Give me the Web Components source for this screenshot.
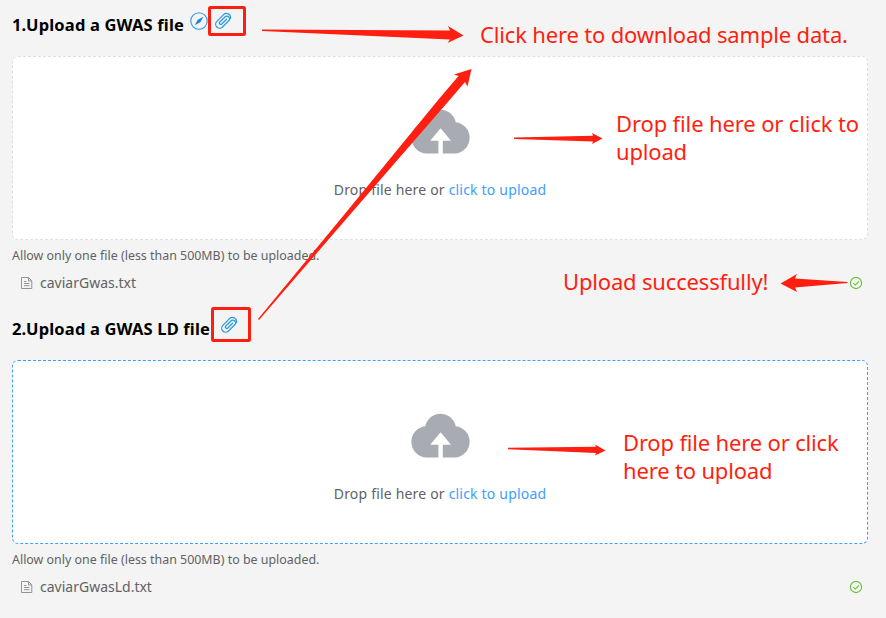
<!DOCTYPE html>
<html lang="en">
<head>
<meta charset="utf-8">
<title>Upload files</title>
<style>
html, body { margin: 0; height: 618px; overflow: hidden; background: #f4f4f4; }
body { font-family: "Noto Sans", "Open Sans", sans-serif; }
</style>
</head>
<body>
<upload-page></upload-page>
<script>
const define = (name, html) => customElements.define(name, class extends HTMLElement {
  constructor() {
    super();
    const t = document.createElement('template');
    t.innerHTML = html;
    this.attachShadow({ mode: 'open' }).append(t.content.cloneNode(true));
  }
});

define('clip-icon', `
<style>:host{display:block;width:18px;height:18px}svg{display:block}</style>
<svg width="18" height="18" viewBox="-9 -9 18 18" fill="none" stroke="#2a9be0" stroke-width="1.25" stroke-linecap="round">
<path transform="rotate(45)" d="M1.3 -3.8V3A1.4 1.4 0 0 1 -1.5 3V-4.2A2.7 2.7 0 0 1 3.9 -4.2V4.6A4 4 0 0 1 -4.1 4.6V-4.9A4.1 4.1 0 0 1 3.4 -7.2"/></svg>`);

define('compass-icon', `
<style>:host{display:block;width:18px;height:18px}svg{display:block}</style>
<svg width="18" height="18" viewBox="0 0 18 18"><circle cx="9" cy="9" r="8.2" fill="none" stroke="#2a9be0" stroke-width="1.1"/>
<path d="M13.3 4.7L10.3 10.2L4.7 13.3L7.8 7.8Z" fill="#1689d6"/></svg>`);

define('cloud-icon', `
<style>:host{display:block;width:59px;height:45px}svg{display:block}</style>
<svg width="59" height="45" viewBox="0 0 59 45"><path fill="#a8abb2" d="M14.3 13.3A15.5 15.5 0 0 1 44.7 13.3A15.6 15.6 0 0 1 43.5 44.4H31.8V31.7H40L29.6 19.2L19.2 31.7H27.4V44.4H15.5A15.6 15.6 0 0 1 14.3 13.3Z"/></svg>`);

define('document-icon', `
<style>:host{display:block;width:12px;height:13px}svg{display:block}</style>
<svg width="12" height="13" viewBox="0 0 12 13" fill="none" stroke="#909399" stroke-width="1"><path d="M.5 .5H7.5L10.8 3.8V11.500H.5ZM7.4 .5V4H10.800M3 4.5H5.200M3 6.500H8.500M3 8.700H8.500"/></svg>`);

define('success-icon', `
<style>:host{display:block;width:13px;height:13px}svg{display:block}</style>
<svg width="13" height="13" viewBox="0 0 13 13" fill="none" stroke="#67c23a" stroke-width="1.1"><circle cx="6" cy="6" r="5.6"/><path d="M3.200 6.200L5.300 8.100L9 4.400"/></svg>`);

define('section-title', `
<style>:host{display:flex;height:34px;font-size:16.5px;font-weight:700;line-height:22px;color:#000}
.t{padding-top:8px;white-space:nowrap;letter-spacing:.16px}.icons{display:flex}</style>
<div class="t"><slot></slot></div><div class="icons"><slot name="icons"></slot></div>`);

define('drop-zone', `
<style>:host{display:flex;box-sizing:border-box;height:184px;flex-direction:column;align-items:center;background:#fff;border:1px dashed var(--edge,#dcdfe6);border-radius:6px;padding-top:52px}
p{margin:26px 0 0;font-size:14px;line-height:20px;color:#606266;white-space:nowrap;letter-spacing:.19px}span{color:#409eff}</style>
<cloud-icon></cloud-icon><p>Drop file here or <span>click to upload</span></p>`);

define('file-row', `
<style>:host{display:flex;align-items:center;height:24px;padding:0 5px 0 9px;font-size:14px;color:#606266}
.n{margin-left:7px;flex:1;line-height:24px}</style>
<document-icon></document-icon><span class="n"><slot></slot></span><success-icon></success-icon>`);

define('upload-section', `
<style>:host{display:block;height:304px}.hint{margin-top:8px;height:16px;line-height:16px;font-size:12.4px;letter-spacing:.015px;color:#606266;white-space:nowrap}
drop-zone{margin-top:16px}file-row{margin-top:7px}</style>
<slot name="title"></slot><drop-zone></drop-zone>
<div class="hint">Allow only one file (less than 500MB) to be uploaded.</div>
<file-row><slot name="file"></slot></file-row>`);

define('red-note', `
<style>:host{position:absolute;font-size:22px;line-height:28px;letter-spacing:-.17px;color:#ff1f10;white-space:nowrap}
::slotted(span){display:block}</style><slot></slot>`);

define('annotation-layer', `
<style>:host{position:absolute;inset:0;pointer-events:none}svg{position:absolute;inset:0}</style>
<svg width="886" height="618" viewBox="0 0 886 618" fill="#ff1f10">
<g fill="none" stroke="#ff1f10" stroke-width="3"><rect x="209.5" y="7.5" width="35" height="27" rx="1"/><rect x="212.5" y="308.5" width="37" height="32" rx="1"/></g>
<path d="M262 29.5L450 30.4L448 26L463.5 35.5L447.5 43L450 39.4L262 31Z"/>
<path d="M258 319L348 210L438.5 99.5L458.5 76L454 74.5L471.5 69L467.5 86.5L465 82L450 99.5L354 210L259 320Z"/>
<path d="M514 137.5L593 135.7L592 133L602.5 138.5L592 144L593 141.5L514 139Z"/>
<path d="M847.500 282L795 278.500L797 274L780.500 283.500L797 292L795 287.500L847.500 283Z"/>
<path d="M508 447.700L596 446.700L595 444.500L605.500 450.500L595 455.500L596 453L508 449.200Z"/>
</svg>
<red-note style="left:480px;top:20px"><span>Click here to download sample data.</span></red-note>
<red-note style="left:616px;top:109px"><span style="letter-spacing:-.13px">Drop file here or click to</span><span>upload</span></red-note>
<red-note style="left:563px;top:267px"><span>Upload successfully!</span></red-note>
<red-note style="left:623px;top:428px"><span>Drop file here or click</span><span>here to upload</span></red-note>`);

define('upload-page', `
<style>:host{display:block;position:relative;box-sizing:border-box;width:886px;height:618px;padding:6px 18px 0 12px}
.a{margin:6px 0 0 6px}.b{margin:6px 0 0 6px}.c{margin:6px 0 0 10px}</style>
<upload-section><section-title slot="title">1.Upload a GWAS file<compass-icon slot="icons" class="a"></compass-icon><clip-icon slot="icons" class="b"></clip-icon></section-title><span slot="file">caviarGwas.txt</span></upload-section>
<upload-section style="--edge:#409eff"><section-title slot="title">2.Upload a GWAS LD file<clip-icon slot="icons" class="c"></clip-icon></section-title><span slot="file">caviarGwasLd.txt</span></upload-section>
<annotation-layer></annotation-layer>`);
</script>
</body>
</html>
